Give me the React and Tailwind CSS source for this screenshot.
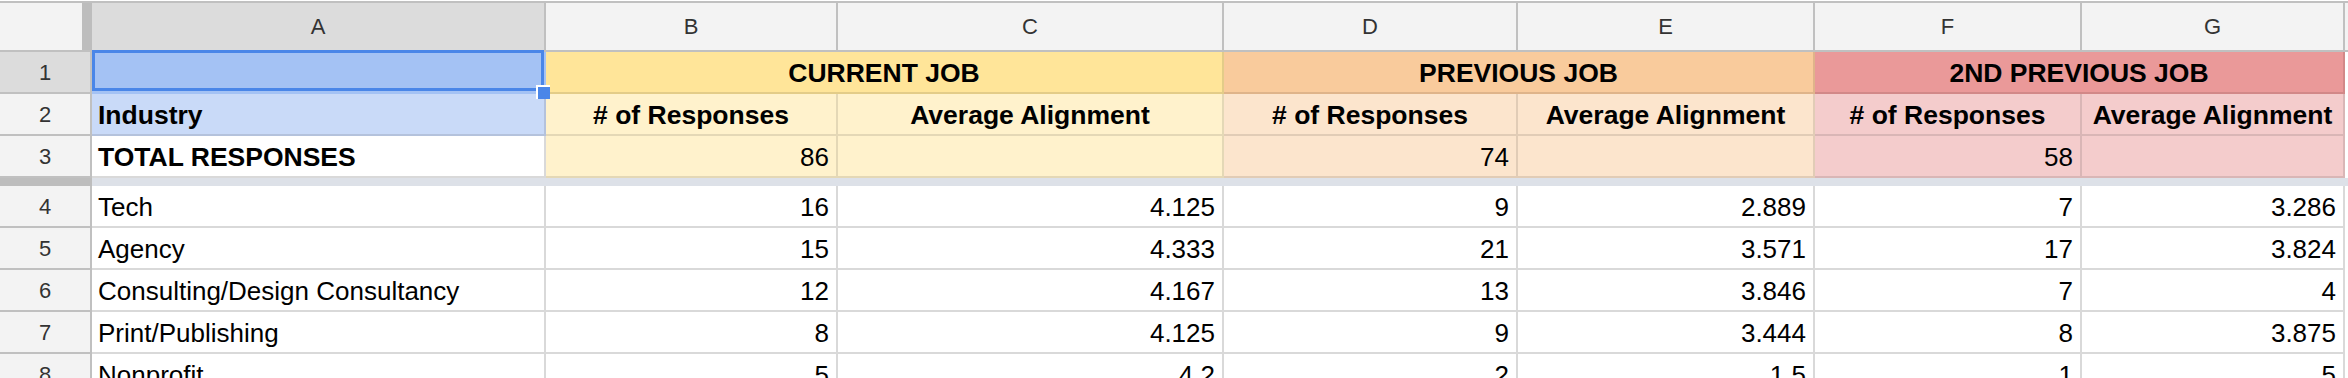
import React from "react";

const GRID =
  "grid grid-cols-[92px_454px_292px_386px_294px_297px_267px_263px_1fr]";

const rows = [
  ["4", "Tech", "16", "4.125", "9", "2.889", "7", "3.286"],
  ["5", "Agency", "15", "4.333", "21", "3.571", "17", "3.824"],
  ["6", "Consulting/Design Consultancy", "12", "4.167", "13", "3.846", "7", "4"],
  ["7", "Print/Publishing", "8", "4.125", "9", "3.444", "8", "3.875"],
  ["8", "Nonprofit", "5", "4.2", "2", "1.5", "1", "5"],
];

function RowHead({ n, selected }) {
  return (
    <div
      className={`h-[42px] border-r-2 border-b-2 border-[#c0c0c0] flex items-center justify-center text-[22px] text-[#333] ${
        selected ? "bg-[#dcdcdc]" : "bg-[#f3f3f3]"
      }`}
    >
      {n}
    </div>
  );
}

function Cell({ children, className = "", align = "left", bold = false }) {
  const al =
    align === "right"
      ? "justify-end pr-[7px]"
      : align === "center"
      ? "justify-center"
      : "justify-start pl-[6px]";
  return (
    <div
      className={`h-[42px] border-r-2 border-b-2 flex items-end pb-[6px] leading-[26px] text-black whitespace-nowrap overflow-hidden ${al} ${
        bold ? "font-bold text-[26.5px]" : "text-[26px]"
      } ${className}`}
    >
      {children}
    </div>
  );
}

export default function App() {
  return (
    <div className="w-full h-[378px] overflow-hidden bg-white pt-[1px] font-['Liberation_Sans',Arial,sans-serif]">
      {/* column headers */}
      <div className={`${GRID} border-t-2 border-[#c0c0c0]`}>
        <div className="h-[49px] flex border-b-2 border-[#c0c0c0]">
          <div className="w-[82px] bg-[#f3f3f3]" />
          <div className="w-[10px] bg-[#bdbdbd]" />
        </div>
        {["A", "B", "C", "D", "E", "F", "G"].map((l, i) => (
          <div
            key={l}
            className={`h-[49px] border-r-2 border-b-2 border-[#c0c0c0] flex items-center justify-center text-[22px] text-[#333] ${
              i === 0 ? "bg-[#dcdcdc]" : "bg-[#f3f3f3]"
            }`}
          >
            {l}
          </div>
        ))}
        <div className="h-[49px] bg-[#f3f3f3] border-b-2 border-[#c0c0c0]" />
      </div>

      {/* row 1 */}
      <div className={GRID}>
        <RowHead n="1" selected />
        <div className="relative h-[42px] bg-[#a4c2f4] border-r-2 border-b-2 border-[#a4c2f4]">
          <div className="absolute left-0 right-0 top-[-2px] bottom-[1px] border-[3px] border-[#4a86e8]" />
          <div className="absolute left-[444px] top-[33px] w-[14px] h-[14px] bg-[#4a86e8] border-l-2 border-t-2 border-white" />
        </div>
        <Cell bold align="center" className="col-span-2 bg-[#ffe599] border-[#e3cc88]">
          CURRENT JOB
        </Cell>
        <Cell bold align="center" className="col-span-2 bg-[#f9cb9c] border-[#dfb48a]">
          PREVIOUS JOB
        </Cell>
        <Cell bold align="center" className="col-span-2 bg-[#ea9999] border-[#d28888]">
          2ND PREVIOUS JOB
        </Cell>
        <div className="h-[42px]" />
      </div>

      {/* row 2 */}
      <div className={GRID}>
        <RowHead n="2" />
        <Cell bold className="bg-[#c9daf8] border-[#b4c2dc]">
          Industry
        </Cell>
        <Cell bold align="center" className="bg-[#fff2cc] border-[#e4d8b6]">
          # of Responses
        </Cell>
        <Cell bold align="center" className="bg-[#fff2cc] border-[#e4d8b6]">
          Average Alignment
        </Cell>
        <Cell bold align="center" className="bg-[#fce5cd] border-[#e1ccb6]">
          # of Responses
        </Cell>
        <Cell bold align="center" className="bg-[#fce5cd] border-[#e1ccb6]">
          Average Alignment
        </Cell>
        <Cell bold align="center" className="bg-[#f4cccc] border-[#d9b6b6]">
          # of Responses
        </Cell>
        <Cell bold align="center" className="bg-[#f4cccc] border-[#d9b6b6]">
          Average Alignment
        </Cell>
        <div className="h-[42px]" />
      </div>

      {/* row 3 */}
      <div className={GRID}>
        <RowHead n="3" />
        <Cell bold className="bg-white border-[#d9d9d9]">
          TOTAL RESPONSES
        </Cell>
        <Cell align="right" className="bg-[#fff2cc] border-[#e4d8b6]">
          86
        </Cell>
        <Cell className="bg-[#fff2cc] border-[#e4d8b6]" />
        <Cell align="right" className="bg-[#fce5cd] border-[#e1ccb6]">
          74
        </Cell>
        <Cell className="bg-[#fce5cd] border-[#e1ccb6]" />
        <Cell align="right" className="bg-[#f4cccc] border-[#d9b6b6]">
          58
        </Cell>
        <Cell className="bg-[#f4cccc] border-[#d9b6b6]" />
        <div className="h-[42px]" />
      </div>

      {/* freeze bar */}
      <div className={GRID}>
        <div className="h-[8px] bg-[#bdbdbd]" />
        <div className="h-[8px] col-span-8 bg-[#dde1e8]" />
      </div>

      {/* data rows */}
      {rows.map((r) => (
        <div key={r[0]} className={GRID}>
          <RowHead n={r[0]} />
          <Cell className="bg-white border-[#d9d9d9]">{r[1]}</Cell>
          {r.slice(2).map((v, i) => (
            <Cell key={i} align="right" className="bg-white border-[#d9d9d9]">
              {v}
            </Cell>
          ))}
          <div className="h-[42px]" />
        </div>
      ))}
    </div>
  );
}
